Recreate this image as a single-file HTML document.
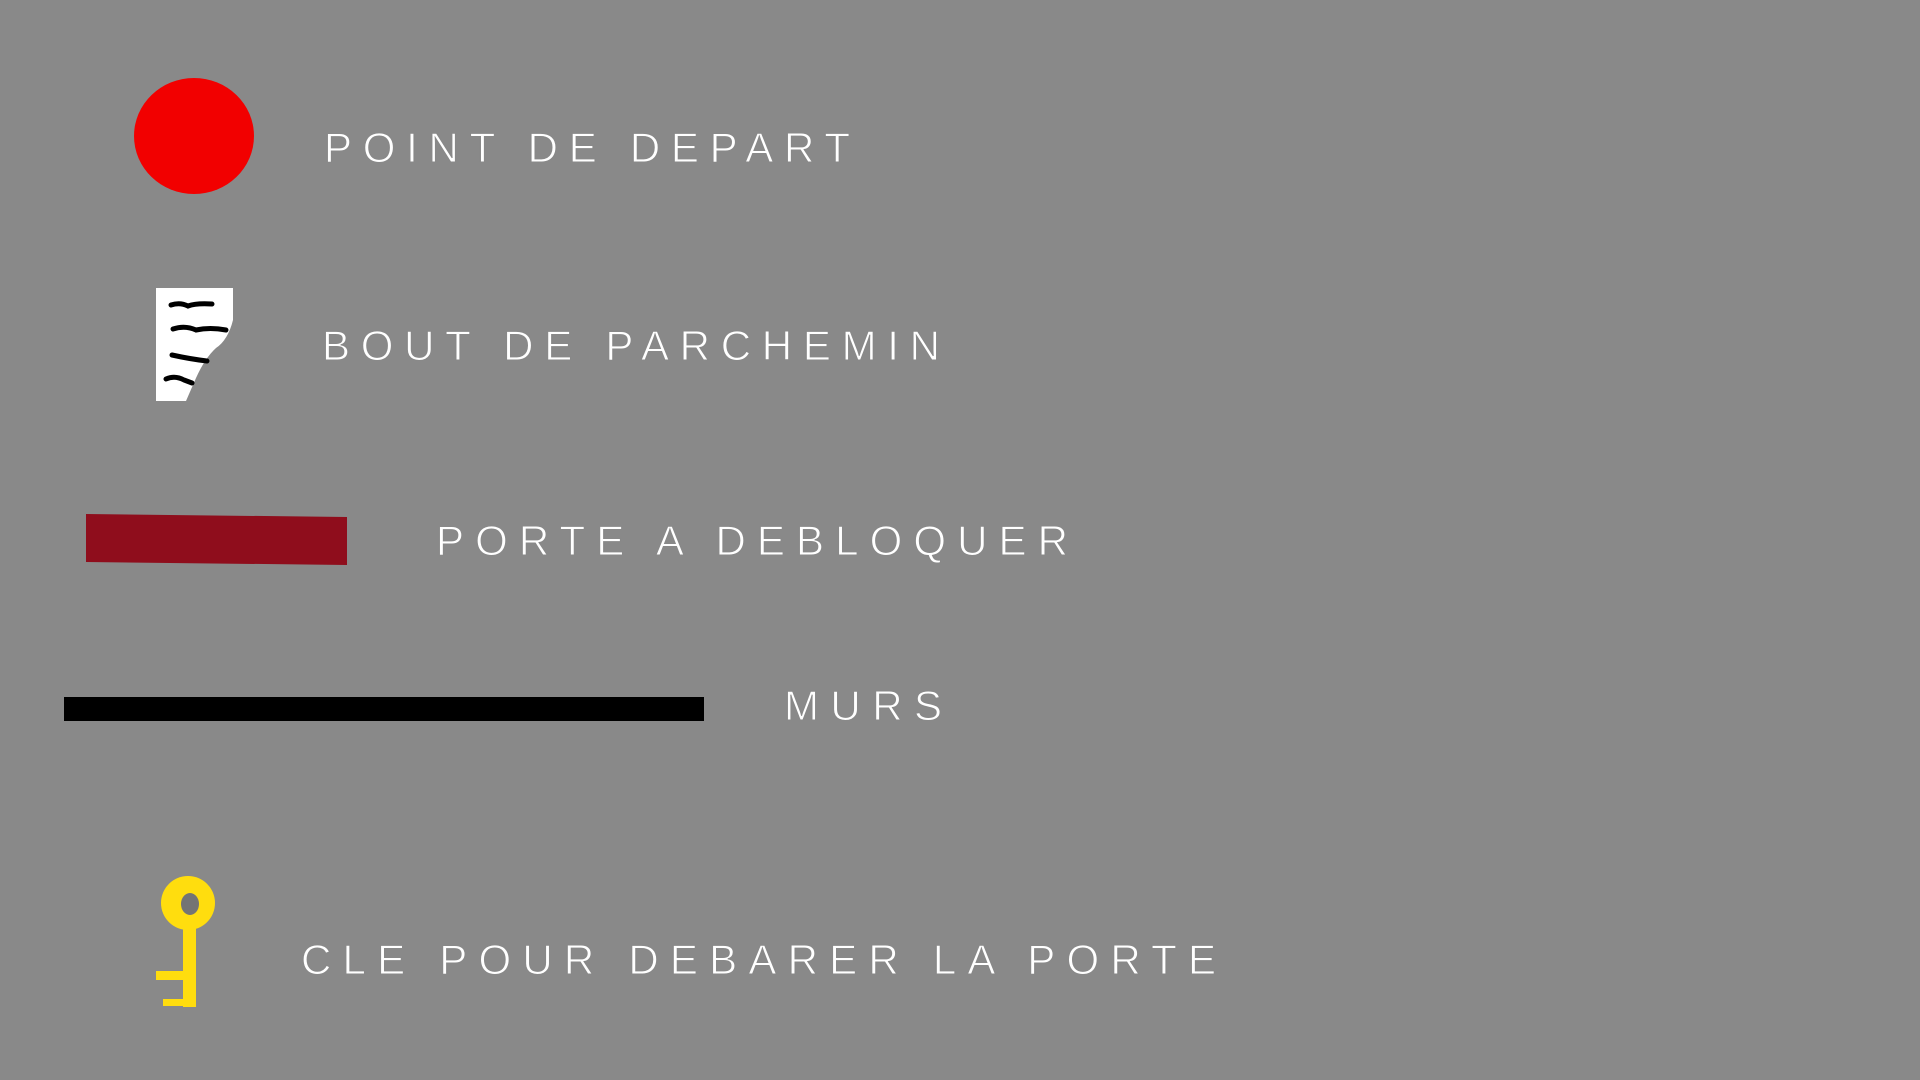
<!DOCTYPE html>
<html><head><meta charset="utf-8"><style>
html,body{margin:0;padding:0;background:#898989;width:1920px;height:1080px;overflow:hidden}
svg{display:block}
text{font-family:"Liberation Sans",sans-serif;fill:#fff;font-size:42px;font-weight:normal;stroke:#898989;stroke-width:1px}
</style></head><body>
<svg width="1920" height="1080" viewBox="0 0 1920 1080" xmlns="http://www.w3.org/2000/svg">
<rect width="1920" height="1080" fill="#898989"/>
<ellipse cx="194" cy="136" rx="60" ry="58" fill="#f20000"/>
<text x="324" y="162" textLength="526" lengthAdjust="spacing">POINT DE DEPART</text>

<path d="M156 288 L233 288 L233 320 Q228 340 216 348 Q205 358 196 378 L186 401 L156 401 Z" fill="#fff"/>
<g stroke="#000" stroke-width="5" fill="none" stroke-linecap="round">
<path d="M171 305 Q180 302 188 306 Q196 303 212 304"/>
<path d="M173 329 Q185 325 196 330 Q210 327 226 330"/>
<path d="M172 355 Q190 359 207 361"/>
<path d="M166 379 Q175 375 184 380 L192 383"/>
</g>
<text x="322" y="360" textLength="618" lengthAdjust="spacing">BOUT DE PARCHEMIN</text>

<path d="M86 514 L347 517 L347 565 L86 562 Z" fill="#8f0d1c"/>
<text x="436" y="555" textLength="632" lengthAdjust="spacing">PORTE A DEBLOQUER</text>

<rect x="64" y="697" width="640" height="24" fill="#000"/>
<text x="784" y="720" textLength="158" lengthAdjust="spacing">MURS</text>

<g fill="#ffdd0e">
<circle cx="188" cy="903" r="27"/>
<rect x="183" y="920" width="13" height="87"/>
<rect x="156" y="971" width="28" height="9"/>
<rect x="163" y="999" width="21" height="7"/>
</g>
<ellipse cx="190" cy="904" rx="9" ry="11" fill="#747474"/>
<text x="301" y="974" textLength="915" lengthAdjust="spacing">CLE POUR DEBARER LA PORTE</text>
</svg>
</body></html>
